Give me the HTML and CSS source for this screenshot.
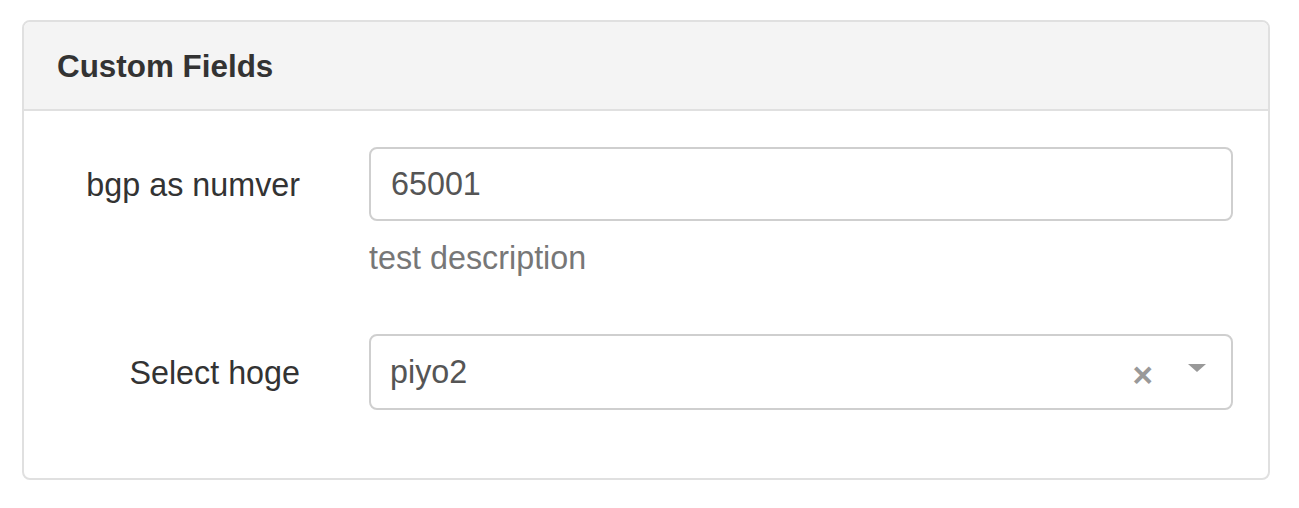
FILE: index.html
```html
<!DOCTYPE html>
<html lang="en">
<head>
<meta charset="utf-8">
<title>Custom Fields</title>
<link rel="stylesheet" href="styles.css">
</head>
<body>
<div class="panel">
  <div class="panel-heading">
    <h3 class="panel-title">Custom Fields</h3>
  </div>
  <div class="panel-body">
    <div class="form-row">
      <label class="form-label" for="bgp">bgp as numver</label>
      <div class="form-field">
        <input id="bgp" class="form-control" type="text" value="65001">
        <div class="help-block">test description</div>
      </div>
    </div>
    <div class="form-row row-select">
      <label class="form-label">Select hoge</label>
      <div class="form-field">
        <div class="select-box">
          <span class="select-value">piyo2</span>
          <span class="select-clear">×</span>
          <span class="select-caret"></span>
        </div>
      </div>
    </div>
  </div>
</div>
</body>
</html>
```

FILE: styles.css
```css
html, body {
  margin: 0;
  padding: 0;
  background: #fff;
}
body {
  padding: 20px 29px 0 22px;
  font-family: "Liberation Sans", Arial, Helvetica, sans-serif;
  color: #333;
}
.panel {
  border: 2px solid #e0e0e0;
  border-radius: 8px;
  overflow: hidden;
  box-sizing: border-box;
  width: 1248px;
  height: 460px;
}
.panel-heading {
  background: #f4f4f4;
  border-bottom: 2px solid #e0e0e0;
  height: 89px;
  box-sizing: border-box;
  padding: 0 33px;
  display: flex;
  align-items: center;
}
.panel-title {
  margin: 0;
  font-size: 31.4px;
  font-weight: bold;
  color: #333;
  position: relative;
  top: 1px;
}
.panel-body {
  padding: 36px 35px 0 0;
}
.form-row {
  display: flex;
  align-items: flex-start;
}
.form-label {
  width: 276px;
  flex: none;
  text-align: right;
  font-size: 32.3px;
  color: #333;
  height: 74px;
  line-height: 76px;
}
.form-field {
  margin-left: 69px;
  flex: 1;
}
.form-control {
  display: block;
  box-sizing: border-box;
  width: 864px;
  height: 74px;
  margin: 0;
  padding: 0 20px;
  border: 2px solid #cfcfcf;
  border-radius: 8px;
  font-family: inherit;
  font-size: 32.3px;
  color: #555;
  background: #fff;
  outline: none;
}
.help-block {
  margin-top: 15px;
  font-size: 32.3px;
  color: #777;
  line-height: 44px;
}
.row-select {
  margin-top: 54px;
}
.row-select .form-label {
  height: 76px;
  line-height: 78px;
}
.select-box {
  box-sizing: border-box;
  width: 864px;
  height: 76px;
  border: 2px solid #cfcfcf;
  border-radius: 8px;
  display: flex;
  align-items: center;
  padding: 0 25px 0 19px;
  font-size: 32.3px;
  color: #555;
}
.select-value {
  flex: 1;
}
.select-clear {
  font-size: 35px;
  font-weight: bold;
  color: #999;
  line-height: 1;
  margin-right: 35px;
  position: relative;
  top: 2px;
}
.select-caret {
  width: 0;
  height: 0;
  border-left: 9px solid transparent;
  border-right: 9px solid transparent;
  border-top: 8px solid #999;
  position: relative;
  top: -4px;
}
```
